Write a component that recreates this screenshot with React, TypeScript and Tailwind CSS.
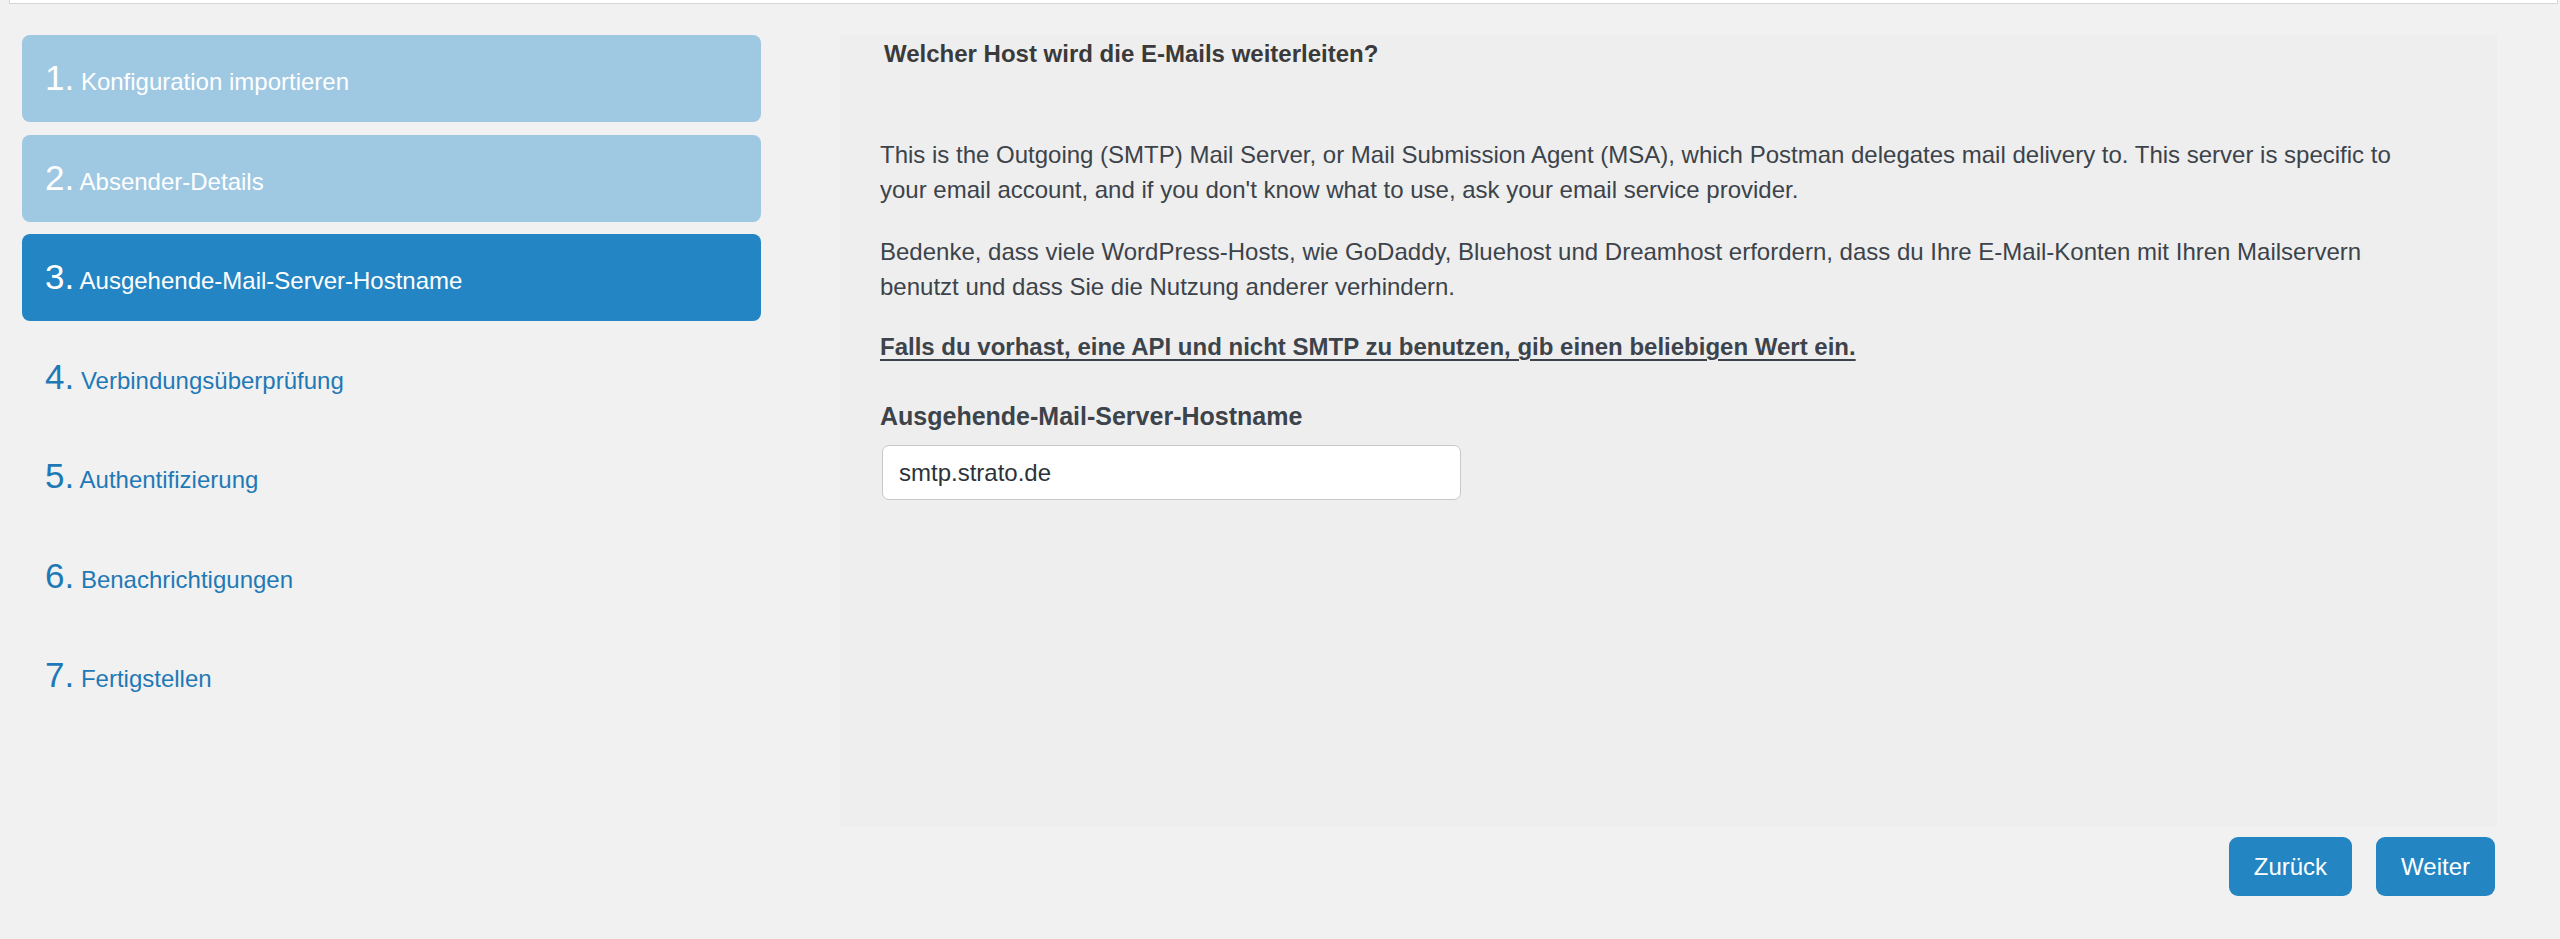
const steps = [
  { n: "1.", label: "Konfiguration importieren", state: "done" },
  { n: "2.", label: "Absender-Details", state: "done" },
  { n: "3.", label: "Ausgehende-Mail-Server-Hostname", state: "current" },
  { n: "4.", label: "Verbindungsüberprüfung", state: "todo" },
  { n: "5.", label: "Authentifizierung", state: "todo" },
  { n: "6.", label: "Benachrichtigungen", state: "todo" },
  { n: "7.", label: "Fertigstellen", state: "todo" },
];

const stateClass: Record<string, string> = {
  done: "bg-[#9fc8e3] text-white",
  current: "bg-[#2385c3] text-white",
  todo: "text-[#1f79b6]",
};

const Step = ({ n, label, state }: { n: string; label: string; state: string }) => (
  <div className={`flex h-[87px] items-center rounded-[8px] pl-[23px] ${stateClass[state]}`}>
    <span className="whitespace-nowrap">
      <span className="text-[35px]">{n}</span>
      <span className="text-[24px]"> {label}</span>
    </span>
  </div>
);

export default function App() {
  return (
    <div
      className="min-h-[939px] bg-[#f1f1f1] text-[#3c434a]"
      style={{ fontFamily: '"Liberation Sans", Arial, sans-serif' }}
    >
      <div className="ml-[9px] mr-[2px] h-[4px] border border-t-0 border-[#d6d6d6] bg-white" />

      <div className="mt-[31px] flex">
        <nav className="ml-[22px] flex w-[739px] flex-col gap-[12.5px]">
          {steps.map((s) => (
            <Step key={s.n} {...s} />
          ))}
        </nav>

        <div className="ml-[79px] flex w-[1657px] flex-col">
          <section className="h-[791px] bg-[#eeeeee] pl-[40px] pr-[68px] text-[24px] leading-[35px]">
            <h3 className="ml-[4px] pt-px font-bold text-[#3a3a3a]">Welcher Host wird die E-Mails weiterleiten?</h3>

            <p className="mt-[66px]">
              This is the Outgoing (SMTP) Mail Server, or Mail Submission Agent (MSA), which Postman delegates mail
              delivery to. This server is specific to your email account, and if you don't know what to use, ask your
              email service provider.
            </p>

            <p className="mt-[27px]">
              Bedenke, dass viele WordPress-Hosts, wie GoDaddy, Bluehost und Dreamhost erfordern, dass du Ihre
              E-Mail-Konten mit Ihren Mailservern benutzt und dass Sie die Nutzung anderer verhindern.
            </p>

            <p className="mt-[25px] font-bold underline underline-offset-[4px]">
              Falls du vorhast, eine API und nicht SMTP zu benutzen, gib einen beliebigen Wert ein.
            </p>

            <label htmlFor="hostname" className="mt-[35px] block text-[25px] font-bold">
              Ausgehende-Mail-Server-Hostname
            </label>

            <input
              id="hostname"
              type="text"
              defaultValue="smtp.strato.de"
              className="mt-[11px] ml-[2px] block h-[55px] w-[579px] rounded-[7px] border border-[#c8c8c8] bg-white pl-[16px] text-[24px] text-[#2c3338] outline-none"
            />
          </section>

          <div className="mt-[11px] mr-[2px] flex justify-end gap-[24px]">
            <button className="h-[59px] rounded-[9px] bg-[#2386c3] px-[25px] text-[24px] text-white">Zurück</button>
            <button className="h-[59px] rounded-[9px] bg-[#2386c3] px-[25px] text-[24px] text-white">Weiter</button>
          </div>
        </div>
      </div>
    </div>
  );
}
